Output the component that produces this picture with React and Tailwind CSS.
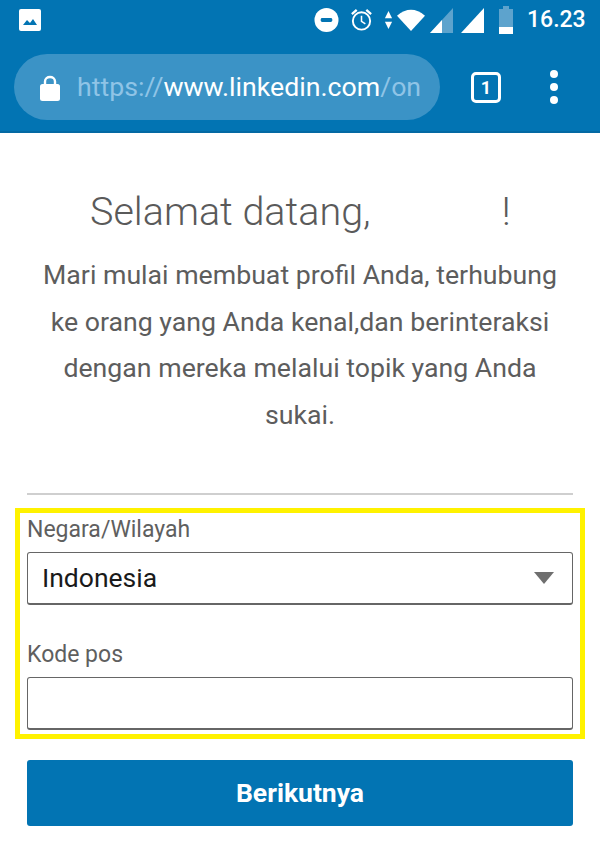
function StatusIcons() {
  return (
    <div className="flex items-center">
      <svg width="25" height="26" viewBox="0 0 26 26" className="shrink-0 ml-[273px]"><circle cx="13" cy="13" r="12.500" fill="#fff"/><rect x="7" y="11" width="12" height="4" rx="1.500" fill="#0274b3"/></svg>
      <svg width="25" height="28" viewBox="0 0 26 28" className="shrink-0 ml-[10px]" fill="none" stroke="#fff"><circle cx="13" cy="15" r="9" strokeWidth="2"/><path d="M13 9.500V15.500L17 18" strokeWidth="1.600"/><path d="M3 8L8 3.500M23 8L18 3.500" strokeWidth="2.400"/></svg>
      <svg width="9" height="22" viewBox="0 0 10 22" className="shrink-0 ml-[10px]" fill="#fff"><path d="M5 1L9 9H1ZM5 21L1 13H9Z"/></svg>
      <svg width="28" height="24" viewBox="0 0 29 23" className="shrink-0 ml-[4px]" fill="#fff"><path d="M0 7Q14.500 -5 29 7L14.500 23Z"/></svg>
      <svg width="23" height="25" viewBox="0 0 23 25" className="shrink-0 ml-[5px]"><path d="M23 0V25H0Z" fill="#5da3cd"/><path d="M12 12V25H0Z" fill="#fff"/></svg>
      <svg width="23" height="25" viewBox="0 0 23 25" className="shrink-0 ml-[8px]"><path d="M23 0V25H0Z" fill="#fff"/></svg>
      <svg width="14" height="28" viewBox="0 0 14 28" className="shrink-0 ml-[15px]"><path d="M4 0H10V3H14V28H0V3H4Z" fill="#5da3cd"/><rect y="21" width="14" height="7" fill="#fff"/></svg>
      <span className="ml-[14px] text-[23px] leading-[28px] text-white font-['Roboto',sans-serif] font-medium whitespace-nowrap">16.23</span>
    </div>
  );
}

function Field({ label, className, children }) {
  return (
    <div className={className}>
      <div className="text-[23px] leading-[26px] text-[#5f5f5f]">{label}</div>
      <div className="mt-[9px] h-[53px] rounded-[3px] border border-b-2 border-[#666666] flex items-center justify-between pl-[14px] pr-[18px]">
        {children}
      </div>
    </div>
  );
}

export default function App() {
  return (
    <div className="w-[600px] h-[849px] bg-white overflow-hidden font-['Roboto',sans-serif]">
      <header className="h-[133px] bg-[#0274b3] border-b-[2px] border-[#0369a3]">
        <div className="h-[40px] flex items-center pl-[19px]">
          <svg width="22" height="22" viewBox="0 0 22 22" className="shrink-0"><rect width="22" height="22" rx="2" fill="#fff"/><path d="M4 16L8 11L11 14L14 10L18 16Z" fill="#0274b3"/></svg>
          <StatusIcons />
        </div>
        <div className="flex items-center pl-[14px] mt-[14px]">
          <div className="w-[426px] h-[66px] rounded-[33px] bg-[#3b93c6] flex items-center pl-[26px]">
            <svg width="20" height="27" viewBox="0 0 20 27" fill="none" className="shrink-0"><path d="M5 12V7.500C5 1.500 15 1.500 15 7.500V12" stroke="#fff" strokeWidth="2.400"/><rect y="10" width="20" height="17" rx="2.500" fill="#fff"/></svg>
            <div className="ml-[17px] text-[26.700px] leading-[32px] whitespace-nowrap text-[#8fc4e6]">
              https://<span className="text-white">www.linkedin.com</span>/on
            </div>
          </div>
          <div className="ml-[31px] w-[30px] h-[31px] rounded-[5px] border-[3px] border-white flex items-center justify-center text-white text-[18px] font-bold">1</div>
          <div className="ml-[49px] flex flex-col gap-[5px]">
            <span className="w-[8px] h-[8px] rounded-full bg-white"></span>
            <span className="w-[8px] h-[8px] rounded-full bg-white"></span>
            <span className="w-[8px] h-[8px] rounded-full bg-white"></span>
          </div>
        </div>
      </header>

      <main className="px-[27px]">
        <h1 className="mt-[53px] h-[52px] flex text-[39.500px] leading-[52px] font-light text-[#5a5a5a] pl-[63px] whitespace-nowrap">
          <span>Selamat datang,</span>
          <span className="ml-[131px]">!</span>
        </h1>
        <p className="mt-[14px] text-[26.700px] leading-[46.700px] text-[#5d5d5d] text-center whitespace-nowrap">
          Mari mulai membuat profil Anda, terhubung<br />
          ke orang yang Anda kenal,dan berinteraksi<br />
          dengan mereka melalui topik yang Anda<br />
          sukai.
        </p>
        <hr className="mt-[54px] border-t-2 border-[#cfcfcf]" />

        <section className="-mx-[12px] mt-[13px] h-[231px] border-[5px] border-[#fff200] pl-[7px] pr-[7px] pt-[4px]">
          <Field label="Negara/Wilayah">
            <span className="text-[26.500px] text-[#1a1a1a]">Indonesia</span>
            <svg width="20" height="12" viewBox="0 0 20 12"><path d="M0 0H20L10 12Z" fill="#6f6f6f"/></svg>
          </Field>
          <Field label="Kode pos" className="mt-[37px]" />
        </section>

        <button className="mt-[21px] w-full h-[66px] rounded-[3px] bg-[#0274b3] text-white text-[26.500px] font-bold">Berikutnya</button>
      </main>
    </div>
  );
}
